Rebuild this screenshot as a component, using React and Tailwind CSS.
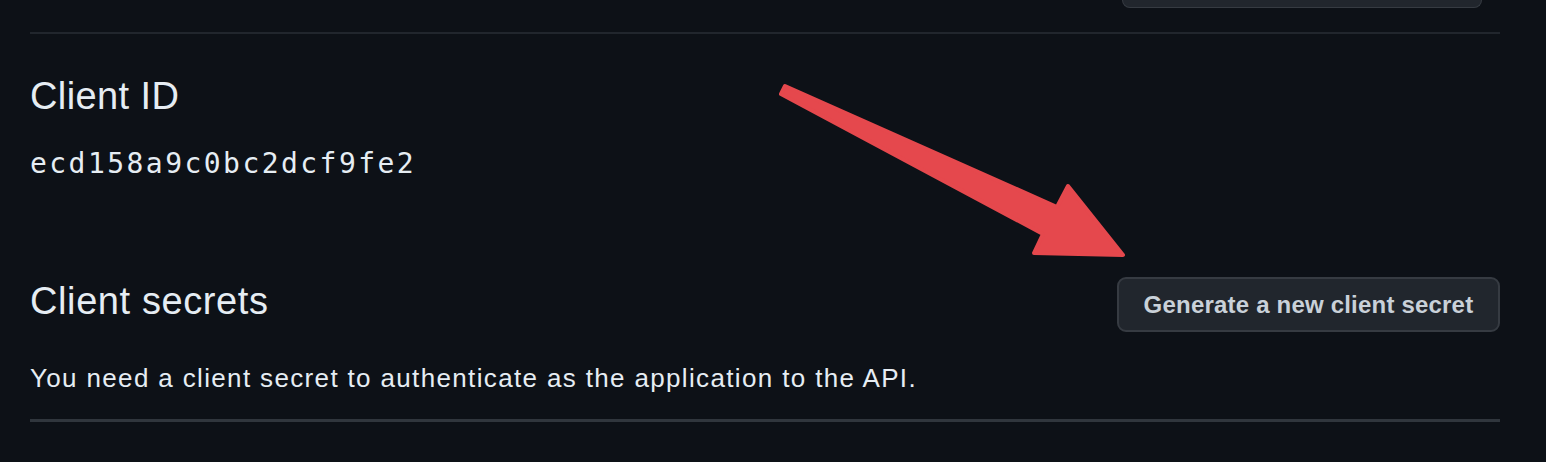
import React from "react";

// 矢印は画面上の注釈なので absolute の SVG で重ねる
const Arrow = () => (
  <svg
    className="absolute left-0 top-0 pointer-events-none"
    width="1546"
    height="462"
    viewBox="0 0 1546 462"
  >
    <polygon
      points="785,86 1057,207 1068,186 1123,255 1034,253 1043,234 781,94"
      fill="#e5484d"
      stroke="#e5484d"
      strokeWidth="4"
      strokeLinejoin="round"
    />
  </svg>
);

const App = () => {
  return (
    <div
      className="relative w-[1546px] h-[462px] overflow-hidden bg-[#0d1117] text-[#e6edf3]"
      style={{ fontFamily: '"Liberation Sans", Arial, sans-serif' }}
    >
      <div className="pl-[30px] pr-[46px]">
        <div className="flex justify-end pr-[18px]">
          <div className="w-[360px] h-[8px] bg-[#21262d] border border-t-0 border-[#363b42] rounded-b-[9px]"></div>
        </div>
        <div className="mt-[24px] h-[2px] bg-[#21262d]"></div>

        <h2 className="mt-[40px] text-[38px] leading-[45px] tracking-[0.4px] font-normal">
          Client ID
        </h2>
        <p
          className="mt-[27px] text-[28px] leading-[36px] tracking-[2.45px] text-[#e6edf3]"
          style={{ fontFamily: '"DejaVu Sans Mono", monospace' }}
        >
          ecd158a9c0bc2dcf9fe2
        </p>

        <div className="mt-[95px] flex items-center justify-between">
          <h2 className="pb-[7px] text-[38px] leading-[38px] tracking-[0.6px] font-normal">
            Client secrets
          </h2>
          <button className="w-[383px] h-[55px] rounded-[9px] bg-[#21262d] border-2 border-[#363b42] text-[24px] tracking-[0.2px] font-semibold text-[#c9d1d9]">
            Generate a new client secret
          </button>
        </div>

        <p className="mt-[30px] text-[26px] leading-[32px] tracking-[1.35px] text-[#e6edf3]">
          You need a client secret to authenticate as the application to the API.
        </p>
        <div className="mt-[25px] h-[3px] bg-[#30363d]"></div>
      </div>
      <Arrow />
    </div>
  );
};

export default App;
